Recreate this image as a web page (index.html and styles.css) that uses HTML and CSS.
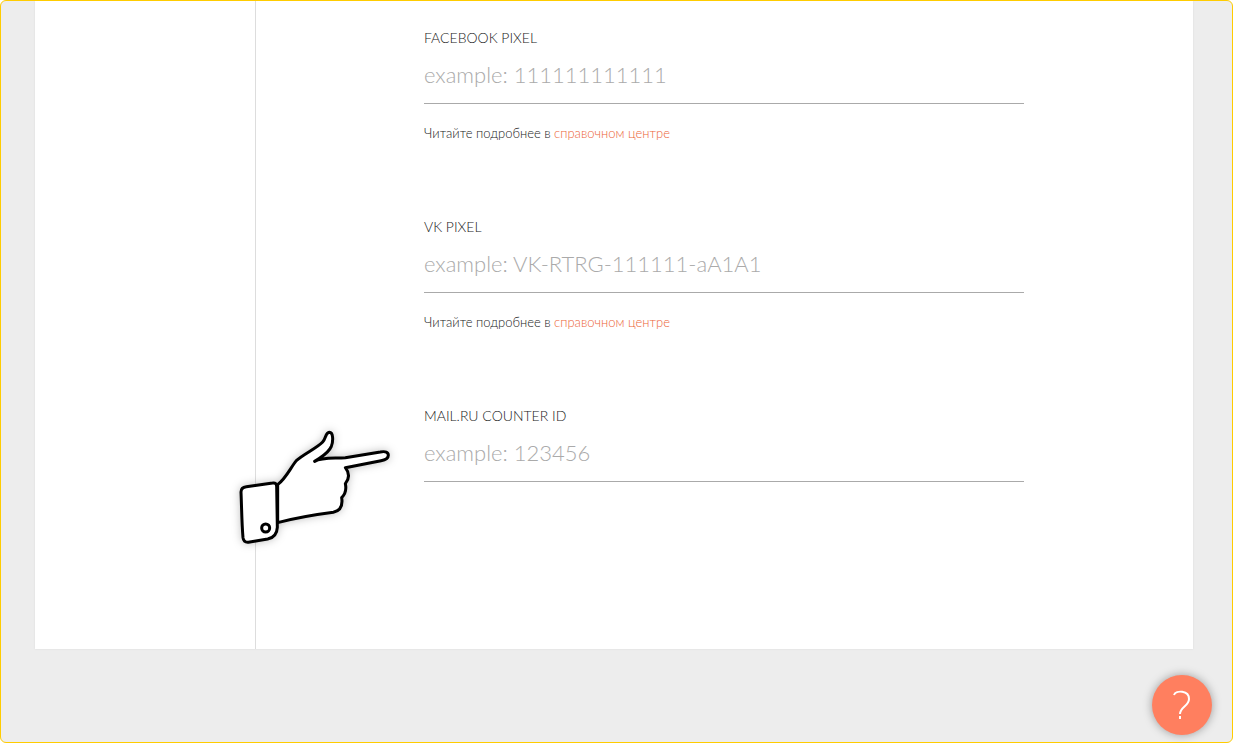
FILE: index.html
```html
<!DOCTYPE html>
<html lang="ru">
<head>
<meta charset="utf-8">
<meta name="viewport" content="width=device-width, initial-scale=1">
<title>Настройки аналитики</title>
<link rel="stylesheet" href="styles.css">
</head>
<body>
<div class="page">
  <div class="panel">
    <aside class="sidebar"></aside>
    <main class="content">
      <form class="form">
        <div class="field">
          <label class="label" for="facebook">FACEBOOK PIXEL</label>
          <input class="input" id="facebook" type="text" placeholder="example: 111111111111">
          <p class="hint">Читайте подробнее в <a class="link" href="#facebook">справочном центре</a></p>
        </div>
        <div class="field">
          <label class="label" for="vk">VK PIXEL</label>
          <input class="input" id="vk" type="text" placeholder="example: VK-RTRG-111111-aA1A1">
          <p class="hint">Читайте подробнее в <a class="link" href="#vk">справочном центре</a></p>
        </div>
        <div class="field">
          <label class="label" for="mailru">MAIL.RU COUNTER ID</label>
          <input class="input" id="mailru" type="text" placeholder="example: 123456">
          <svg class="pointer" viewBox="0 0 540 405" aria-hidden="true">
            <g fill="#fff" stroke="#000" stroke-width="9" stroke-linejoin="round" stroke-linecap="round">
              <path d="M158 194C184 174 196 144 214 122C236 102 276 84 293 66C303 55 301 38 313 37C325 37 325 63 319 79C310 101 290 109 269 124C292 111 330 116 361 113L466 96C481 93 490 96 490 106C490 117 481 120 468 122L361 143C373 158 373 176 361 191C365 209 362 221 350 233C354 258 344 273 325 277C270 284 209 295 158 308Z"/>
              <path d="M64 200L143 189Q155 187 155 200L157 322C156 342 148 353 128 357L70 367Q56 368 54 353C50 305 50 260 48 216Q48 202 64 200Z"/>
              <circle cx="122" cy="324" r="12"/>
            </g>
          </svg>
        </div>
      </form>
    </main>
  </div>
  <button class="help" type="button" aria-label="Помощь">
    <svg class="help-icon" viewBox="0 0 60 60" aria-hidden="true">
      <path d="M22 20C24 15 37 15 37 24C37 31 28 32 28 39" fill="none" stroke="#fff" stroke-width="2"/>
      <path d="M28 41V44" stroke="#fff" stroke-width="2"/>
    </svg>
  </button>
</div>
</body>
</html>
```
FILE: styles.css
```css
* {
  box-sizing: border-box;
}

body {
  margin: 0;
  background: #fff;
  font-family: Lato, "Open Sans", sans-serif;
  font-weight: 300;
  color: #222;
}

.page {
  min-height: 100vh;
  padding: 0 39px 93px 34px;
  border: 1px solid #fc0;
  border-radius: 6px;
  background: #ededed;
}

.panel {
  display: flex;
  background: #fff;
  box-shadow: 0 0 2px rgba(0, 0, 0, 0.08);
  clip-path: inset(0 -4px -4px -4px);
}

.sidebar {
  flex: 0 0 221px;
  border-right: 1px solid #ddd;
}

.content {
  flex: 1;
  min-width: 0;
  padding: 27px 21px 167px 20px;
}

.form {
  display: flex;
  flex-direction: column;
  gap: 74px;
  max-width: 600px;
  margin: 0 auto;
}

.field {
  position: relative;
}

.label {
  display: block;
  font-size: 14px;
  line-height: 20px;
}

.input {
  display: block;
  width: 100%;
  height: 56px;
  padding: 0 0 2px;
  border: 0;
  border-bottom: 1px solid #aaa;
  border-radius: 0;
  outline: 0;
  background: transparent;
  font: inherit;
  font-size: 22px;
  color: #222;
}

.input::placeholder {
  color: #aaa;
  opacity: 1;
}

.hint {
  margin: 19px 0 0;
  font-size: 13px;
  line-height: 20px;
}

.link {
  color: #ec6437;
  text-decoration: none;
}

.pointer {
  position: absolute;
  top: 14px;
  left: -199px;
  width: 180px;
  height: 135px;
  overflow: visible;
  filter: drop-shadow(0 0 4px rgba(0, 0, 0, 0.25));
  pointer-events: none;
}

.help {
  position: fixed;
  right: 21px;
  bottom: 8px;
  width: 60px;
  height: 60px;
  padding: 0;
  border: 0;
  border-radius: 50%;
  background: #ff7f5f;
  box-shadow: 0 0 10px rgba(0, 0, 0, 0.35);
  cursor: pointer;
}

.help-icon {
  display: block;
  width: 60px;
  height: 60px;
}
```
